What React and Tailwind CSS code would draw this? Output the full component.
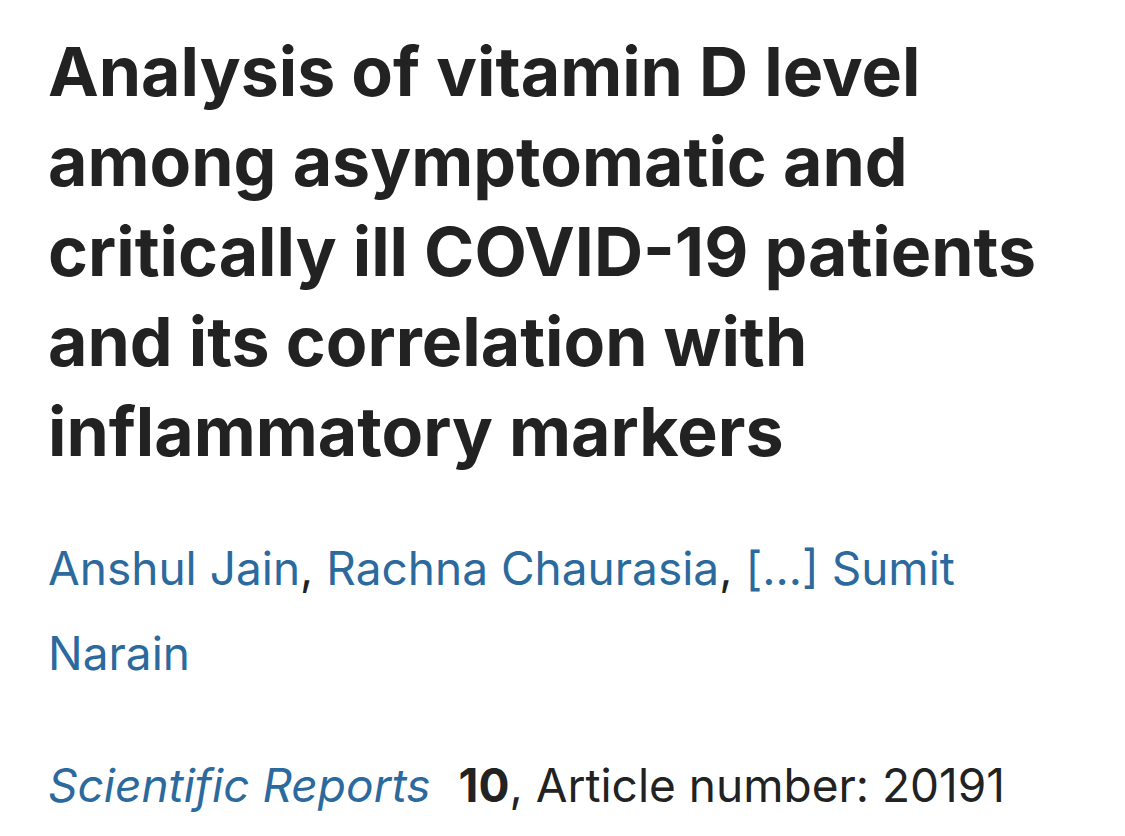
import React from 'react';

const ArticleHeader = () => {
  const link = 'text-[#2c6a9d]';

  return (
    <div className="min-h-screen bg-white px-[48px] pt-[26px] font-['Inter',sans-serif] text-[#222222]">
      {/* Title */}
      <h1 className="text-[68px] font-bold leading-[90px]">
        Analysis of vitamin D level
        <br />
        among asymptomatic and
        <br />
        critically ill COVID-19 patients
        <br />
        and its correlation with
        <br />
        inflammatory markers
      </h1>

      {/* Authors */}
      <div className="mt-[50px] text-[46px] leading-[85px]">
        <span className={link}>Anshul Jain</span>, <span className={link}>Rachna Chaurasia</span>,{' '}
        <span className={link}>[...]</span> <span className={link}>Sumit</span>
        <br />
        <span className={link}>Narain</span>
      </div>

      {/* Journal line */}
      <p className="mt-[47px] text-[46px] leading-[85px]">
        <i className={link}>Scientific Reports</i>
        <span className="ml-[28px] font-bold">10</span>, Article number: 20191
      </p>
    </div>
  );
};

export default function App() {
  return <ArticleHeader />;
}
